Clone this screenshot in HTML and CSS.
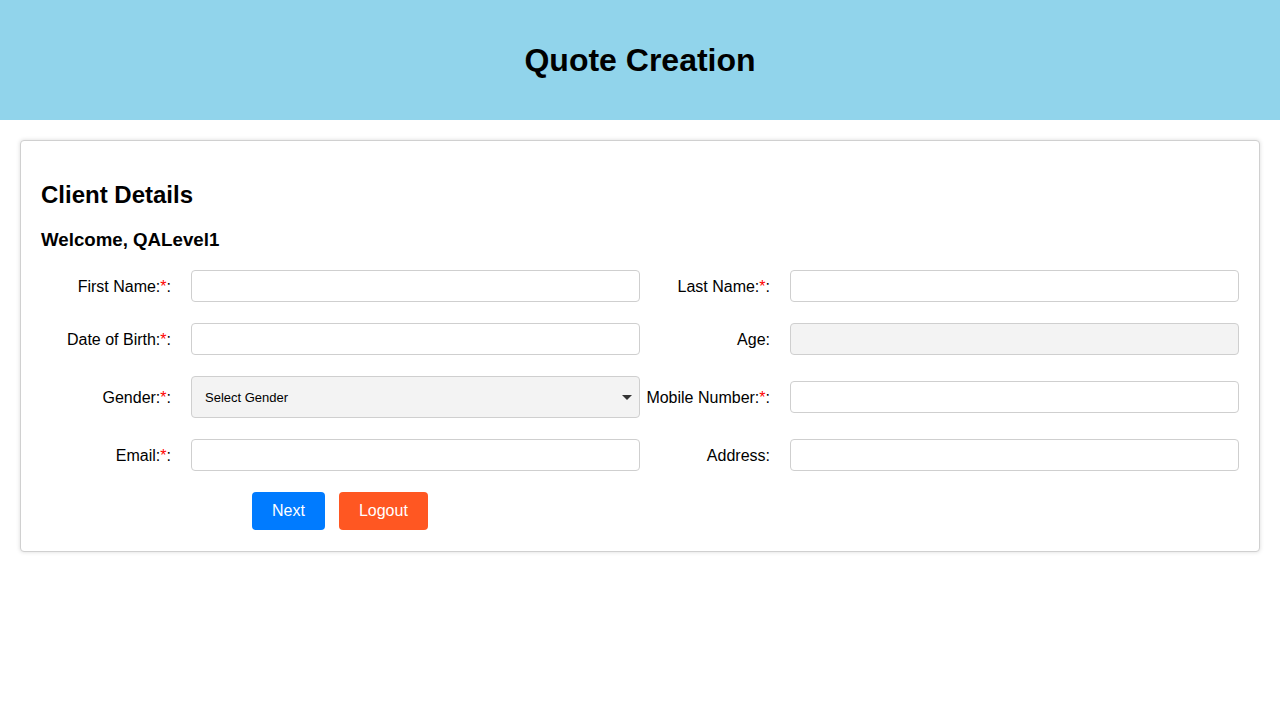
FILE: index.html
```html
<!DOCTYPE html>
<html lang="en">
<head>
<meta charset="utf-8">
<title>Quote Creation</title>
<link rel="stylesheet" href="styles.css">
</head>
<body>
<header class="page-header">
  <h1 class="page-title">Quote Creation</h1>
</header>
<main class="content">
  <section class="card">
    <h2 class="card-title">Client Details</h2>
    <h3 class="welcome">Welcome, QALevel1</h3>
    <form class="form-grid">
      <label class="field-label">First Name:<span class="req">*</span>:</label>
      <input class="field-input" type="text">
      <label class="field-label">Last Name:<span class="req">*</span>:</label>
      <input class="field-input" type="text">

      <label class="field-label">Date of Birth:<span class="req">*</span>:</label>
      <input class="field-input" type="text">
      <label class="field-label">Age:</label>
      <input class="field-input disabled" type="text" disabled>

      <label class="field-label">Gender:<span class="req">*</span>:</label>
      <select class="field-select">
        <option>Select Gender</option>
      </select>
      <label class="field-label">Mobile Number:<span class="req">*</span>:</label>
      <input class="field-input" type="text">

      <label class="field-label">Email:<span class="req">*</span>:</label>
      <input class="field-input" type="text">
      <label class="field-label">Address:</label>
      <input class="field-input" type="text">
    </form>
    <div class="actions">
      <button class="btn btn-next" type="button">Next</button>
      <button class="btn btn-logout" type="button">Logout</button>
    </div>
  </section>
</main>
</body>
</html>
```
FILE: styles.css
```css
* { box-sizing: border-box; }
html, body { margin: 0; padding: 0; }
body {
  font-family: "Liberation Sans", Arial, sans-serif;
  color: #000;
  background: #fff;
}
.page-header {
  height: 120px;
  background: #91d4eb;
  display: flex;
  align-items: center;
  justify-content: center;
}
.page-title {
  margin: 0;
  font-size: 32px;
  font-weight: bold;
}
.content {
  padding: 20px;
}
.card {
  border: 1px solid #d0d0d0;
  border-radius: 4px;
  box-shadow: 0 0 4px rgba(0,0,0,0.15);
  padding: 20px 20px 21px;
  background: #fff;
}
.card-title {
  font-size: 24px;
  font-weight: bold;
  margin: 20px 0 20px;
  line-height: 28px;
}
.welcome {
  font-size: 18.7px;
  font-weight: bold;
  margin: 0 0 20px;
  line-height: 21px;
}
.form-grid {
  display: grid;
  grid-template-columns: 150px 1fr 150px 1fr;
  row-gap: 21px;
  align-items: center;
}
.field-label {
  font-size: 16px;
  text-align: right;
  padding-right: 20px;
  padding-top: 2px;
  white-space: nowrap;
}
.req { color: #ff0000; }
.field-input {
  height: 32px;
  width: 100%;
  border: 1px solid #cfcfcf;
  border-radius: 4px;
  font-family: inherit;
  font-size: 14px;
  padding: 6px 10px;
  background: #fff;
}
.field-input.disabled {
  background: #f3f3f3;
}
.field-select {
  -webkit-appearance: none;
  appearance: none;
  height: 42px;
  width: 100%;
  border: 1px solid #cfcfcf;
  border-radius: 4px;
  font-family: inherit;
  font-size: 13px;
  color: #000;
  padding: 0 13px;
  background-color: #f3f3f3;
  background-image: url("data:image/svg+xml;utf8,<svg xmlns='http://www.w3.org/2000/svg' width='10' height='5'><path d='M0 0 L10 0 L5 5 Z' fill='%23333'/></svg>");
  background-repeat: no-repeat;
  background-position: right 7px center;
}
.actions {
  display: flex;
  gap: 14px;
  padding-left: 211px;
  margin-top: 21px;
}
.btn {
  height: 38px;
  padding: 0 20px;
  border: none;
  border-radius: 4px;
  font-family: inherit;
  font-size: 16px;
  color: #fff;
  cursor: pointer;
}
.btn-next { background: #007bff; }
.btn-logout { background: #ff5722; }
```
